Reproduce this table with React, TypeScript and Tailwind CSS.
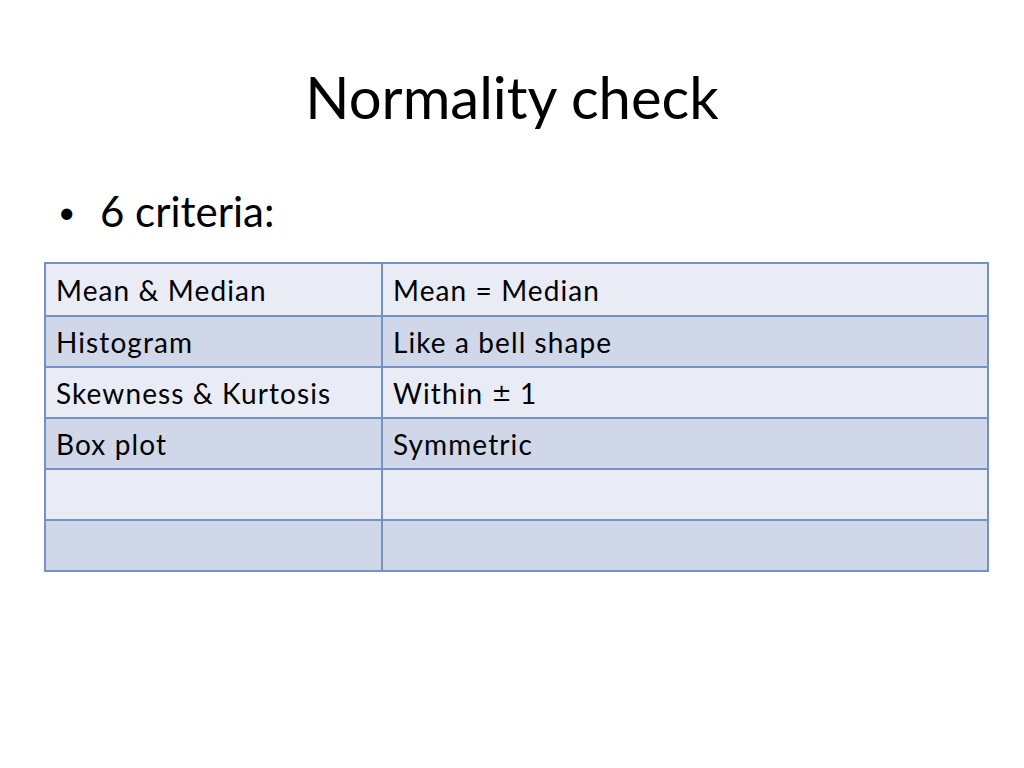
import React from 'react'

const rows: [string, React.ReactNode][] = [
  ['Mean & Median', 'Mean = Median'],
  ['Histogram', 'Like a bell shape'],
  ['Skewness & Kurtosis', <>Within <span className="font-['DejaVu_Serif',serif] font-light text-[24px] tracking-normal">±</span> 1</>],
  ['Box plot', 'Symmetric'],
  ['', ''],
  ['', ''],
]

function App() {
  return (
    <div className="w-[1024px] h-[768px] bg-white text-black font-['Lato',sans-serif] overflow-hidden">
      <h1 className="text-center text-[58px] leading-none pt-[68px] h-[152px]">Normality check</h1>
      <div className="flex items-center h-[110px] pl-[58px] pt-[8px] text-[42px]">
        <span className="text-[30px] w-[42px]">•</span>
        <span>6 criteria:</span>
      </div>
      <div className="ml-[44px] w-[945px] border-2 border-[#7592c6]">
        {rows.map(([a, b], i) => (
          <div
            key={i}
            className={`grid grid-cols-[337px_1fr] h-[51px] text-[28px] tracking-[1.1px] ${i > 0 ? 'border-t-2 border-[#7592c6]' : ''} ${i % 2 === 0 ? 'bg-[#e9ecf5]' : 'bg-[#d0d7e9]'}`}
          >
            <div className="pl-[10px] flex items-center border-r-2 border-[#7592c6] whitespace-nowrap">{a}</div>
            <div className="pl-[10px] flex items-center whitespace-pre">{b}</div>
          </div>
        ))}
      </div>
    </div>
  )
}

export default App
